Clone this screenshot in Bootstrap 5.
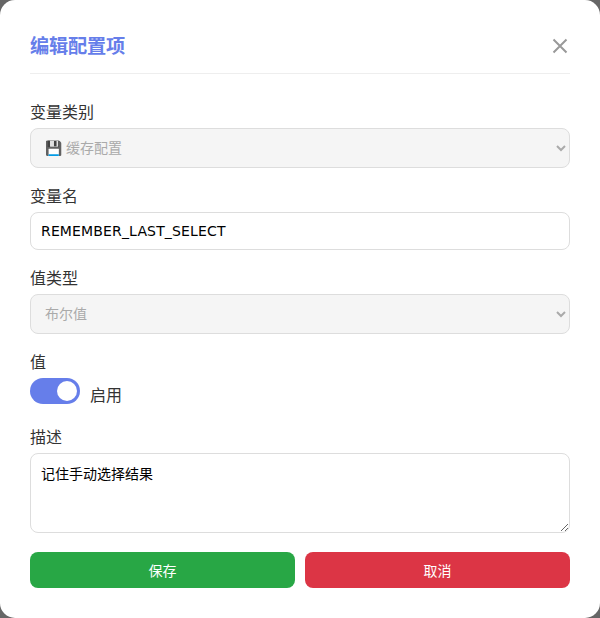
<!DOCTYPE html>
<html lang="zh-CN">
<head>
<meta charset="utf-8">
<title>编辑配置项</title>
<link rel="stylesheet" href="https://cdn.jsdelivr.net/npm/bootstrap@5.3.0/dist/css/bootstrap.min.css">
<style>
html, body { height: 100%; }
body { background: #666; font-family: "DejaVu Sans", "Noto Sans CJK SC", sans-serif; color: #333; overflow: hidden; }
.dlg-box { height: 618px; background: #fff; border-radius: 15px; padding: 30px; }
.dlg-head { height: 44px; border-bottom: 1px solid #eee; margin-bottom: 27px; padding-bottom: 10px; }
.dlg-title { font-family: "DejaVu Sans", "Noto Sans CJK SC", sans-serif; font-size: 19.2px; letter-spacing: -.2px; font-weight: 700; color: #667eea; margin: 0; line-height: 32px; }
.dlg-close { width: 20px; height: 20px; padding: 0; border: 0; background: none; line-height: 0; margin-bottom: 2px; }
.fld { margin-bottom: 17px; }
.fld-label { display: block; font-size: 16px; line-height: 24px; margin-bottom: 3px; color: #333; }
.form-select.fld-sel { appearance: auto; -webkit-appearance: auto; background-image: none; height: 40px; font-size: 14px; word-spacing: -.5px; padding: 10px; border: 1px solid #ddd; border-radius: 8px; color: #333; background-color: #fff; }
.form-select.fld-sel:disabled { background-color: #f5f5f5; color: #aaa; }
.form-control.fld-in { height: 38px; font-size: 14px; letter-spacing: .15px; padding: 0 10px; border-color: #ddd; border-radius: 8px; color: #000; }
.form-control.fld-area { height: 80px; font-size: 14px; padding: 10px; border-color: #ddd; border-radius: 8px; color: #000; line-height: 21px; }
.tog { display: inline-block; position: relative; width: 50px; height: 26px; border-radius: 13px; background: #667eea; }
.tog-knob { position: absolute; top: 3px; right: 3px; width: 20px; height: 20px; border-radius: 50%; background: #fff; }
.tog-text { font-size: 16px; margin-left: 10px; color: #333; line-height: 24px; margin-top: 6px; }
.act-btn { flex: 1 1 0; height: 36px; padding: 2px 0 0; font-size: 14px; border-radius: 8px; border: 0; color: #fff; }
.act-save { background: #28a745; }
.act-cancel { background: #dc3545; }
.val-row { height: 31px; }
.fld-last { margin-bottom: 19px; }
.act-row { gap: 10px; }
</style>
</head>
<body>
<div class="dlg-box">
  <div class="dlg-head d-flex justify-content-between align-items-center">
    <h3 class="dlg-title">编辑配置项</h3>
    <button type="button" class="dlg-close" aria-label="关闭">
      <svg width="20" height="20" viewBox="0 0 20 20"><path d="M3.5 3.5 16.5 16.5M16.5 3.5 3.5 16.5" stroke="#999" stroke-width="2" fill="none"/></svg>
    </button>
  </div>
  <form>
    <div class="fld">
      <label class="fld-label">变量类别</label>
      <select class="form-select fld-sel" disabled><option>💾 缓存配置</option></select>
    </div>
    <div class="fld">
      <label class="fld-label">变量名</label>
      <input class="form-control fld-in" type="text" value="REMEMBER_LAST_SELECT">
    </div>
    <div class="fld">
      <label class="fld-label">值类型</label>
      <select class="form-select fld-sel" disabled><option>布尔值</option></select>
    </div>
    <div class="fld">
      <label class="fld-label">值</label>
      <div class="d-flex align-items-start val-row">
        <span class="tog"><span class="tog-knob"></span></span>
        <span class="tog-text">启用</span>
      </div>
    </div>
    <div class="fld fld-last">
      <label class="fld-label">描述</label>
      <textarea class="form-control fld-area">记住手动选择结果</textarea>
    </div>
    <div class="d-flex act-row">
      <button type="button" class="act-btn act-save">保存</button>
      <button type="button" class="act-btn act-cancel">取消</button>
    </div>
  </form>
</div>
<script src="https://cdn.jsdelivr.net/npm/bootstrap@5.3.0/dist/js/bootstrap.bundle.min.js"></script>
</body>
</html>
